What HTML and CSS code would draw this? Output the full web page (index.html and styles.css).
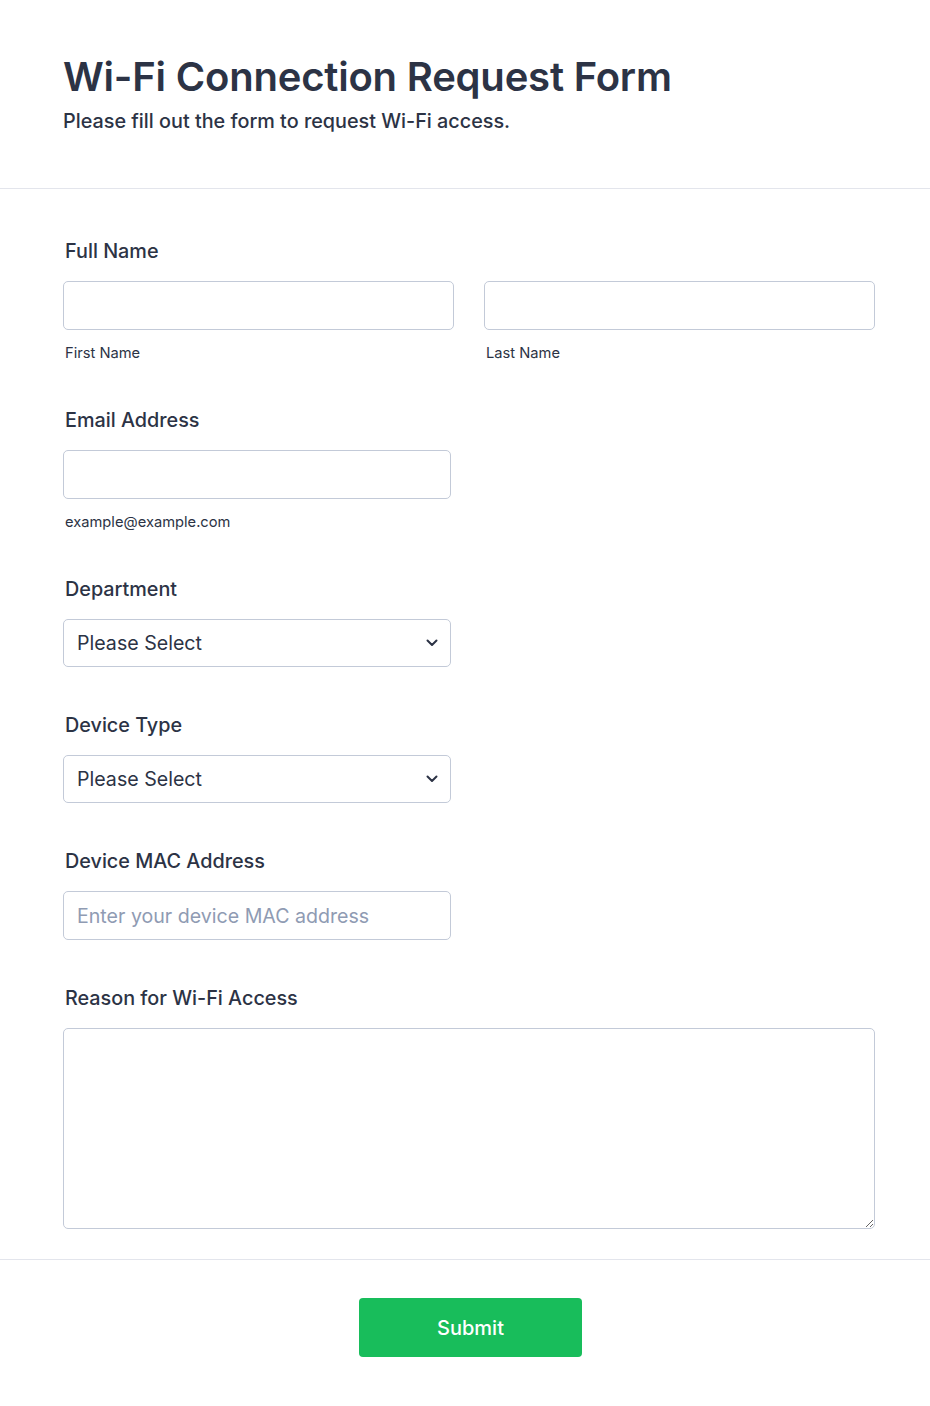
FILE: index.html
```html
<!DOCTYPE html>
<html lang="en">
<head>
    <meta charset="UTF-8">
    <meta name="viewport" content="width=device-width, initial-scale=1.0">
    <title>Wi-Fi Connection Request Form</title>
    <link rel="stylesheet" href="styles.css">
</head>
<body>
    <form class="form" action="#" method="POST">
        <div class="form-header">
            <h1>Wi-Fi Connection Request Form</h1>
            <p class="subheader">Please fill out the form to request Wi-Fi access.</p>
        </div>

        <div class="form-body">
            <div class="form-line">
                <label class="form-label">Full Name</label>
                <div class="name-row">
                    <div class="name-field">
                        <input type="text" id="first_name" name="first_name">
                        <span class="sublabel">First Name</span>
                    </div>
                    <div class="name-field">
                        <input type="text" id="last_name" name="last_name">
                        <span class="sublabel">Last Name</span>
                    </div>
                </div>
            </div>

            <div class="form-line">
                <label class="form-label" for="email">Email Address</label>
                <input type="email" id="email" name="email" class="short">
                <span class="sublabel">example@example.com</span>
            </div>

            <div class="form-line">
                <label class="form-label" for="department">Department</label>
                <div class="select-wrap short">
                    <select id="department" name="department">
                        <option>Please Select</option>
                    </select>
                    <svg class="chevron" width="12" height="8" viewBox="0 0 12 8"><path d="M1.5 1.5 6 6l4.5-4.5" fill="none" stroke="#2c3345" stroke-width="2" stroke-linecap="round" stroke-linejoin="round"/></svg>
                </div>
            </div>

            <div class="form-line">
                <label class="form-label" for="device">Device Type</label>
                <div class="select-wrap short">
                    <select id="device" name="device">
                        <option>Please Select</option>
                    </select>
                    <svg class="chevron" width="12" height="8" viewBox="0 0 12 8"><path d="M1.5 1.5 6 6l4.5-4.5" fill="none" stroke="#2c3345" stroke-width="2" stroke-linecap="round" stroke-linejoin="round"/></svg>
                </div>
            </div>

            <div class="form-line">
                <label class="form-label" for="mac">Device MAC Address</label>
                <input type="text" id="mac" name="mac" class="short" placeholder="Enter your device MAC address">
            </div>

            <div class="form-line last">
                <label class="form-label" for="reason">Reason for Wi-Fi Access</label>
                <textarea id="reason" name="reason"></textarea>
            </div>
        </div>

        <div class="form-footer">
            <button type="submit" class="submit-btn">Submit</button>
        </div>
    </form>
</body>
</html>
```

FILE: styles.css
```css
body {
    margin: 0;
    padding: 0;
    background: #fff;
    font-family: Inter, "Noto Sans", sans-serif;
    color: #2c3345;
}

.form {
    width: 930px;
}

.form-header {
    padding: 53px 63px 56px;
    border-bottom: 1px solid #e3e5ec;
}

.form-header h1 {
    margin: 0;
    font-size: 40px;
    line-height: 48px;
    font-weight: 600;
    letter-spacing: -0.2px;
}

.subheader {
    margin: 9px 0 0;
    font-size: 19.8px;
    line-height: 22px;
    font-weight: 500;
}

.form-body {
    padding: 50px 55px 0 63px;
}

.form-line {
    display: flex;
    flex-direction: column;
    margin-bottom: 46px;
}

.form-line.last {
    margin-bottom: 30px;
}

.form-label {
    margin-left: 2px;
    margin-bottom: 18px;
    font-size: 19.8px;
    line-height: 24px;
    font-weight: 500;
}

.name-row {
    display: flex;
    gap: 30px;
}

.name-field {
    flex: 1;
    display: flex;
    flex-direction: column;
}

input, select, textarea {
    box-sizing: border-box;
    width: 100%;
    height: 49px;
    margin: 0;
    padding: 0 13px;
    border: 1px solid #c3cad8;
    border-radius: 5px;
    background: #fff;
    font-family: inherit;
    font-size: 19.6px;
    color: #2c3345;
}

input::placeholder {
    color: #8f9bb3;
}

.short {
    width: 388px;
}

.sublabel {
    margin: 14px 0 0 2px;
    font-size: 14.7px;
    line-height: 18px;
    color: #2c3345;
}

.select-wrap {
    position: relative;
}

select {
    height: 48px;
    appearance: none;
    -webkit-appearance: none;
}

.chevron {
    position: absolute;
    right: 13px;
    top: 20px;
    pointer-events: none;
}

textarea {
    height: 201px;
    padding: 12px 13px;
    resize: vertical;
}

.form-footer {
    border-top: 1px solid #e3e5ec;
    padding: 38px 0 49px 11px;
    display: flex;
    justify-content: center;
}

.submit-btn {
    width: 223px;
    height: 59px;
    border: none;
    border-radius: 4px;
    background-color: #18bd5b;
    color: #fff;
    font-family: inherit;
    font-size: 20px;
    font-weight: 500;
    cursor: pointer;
}
```
